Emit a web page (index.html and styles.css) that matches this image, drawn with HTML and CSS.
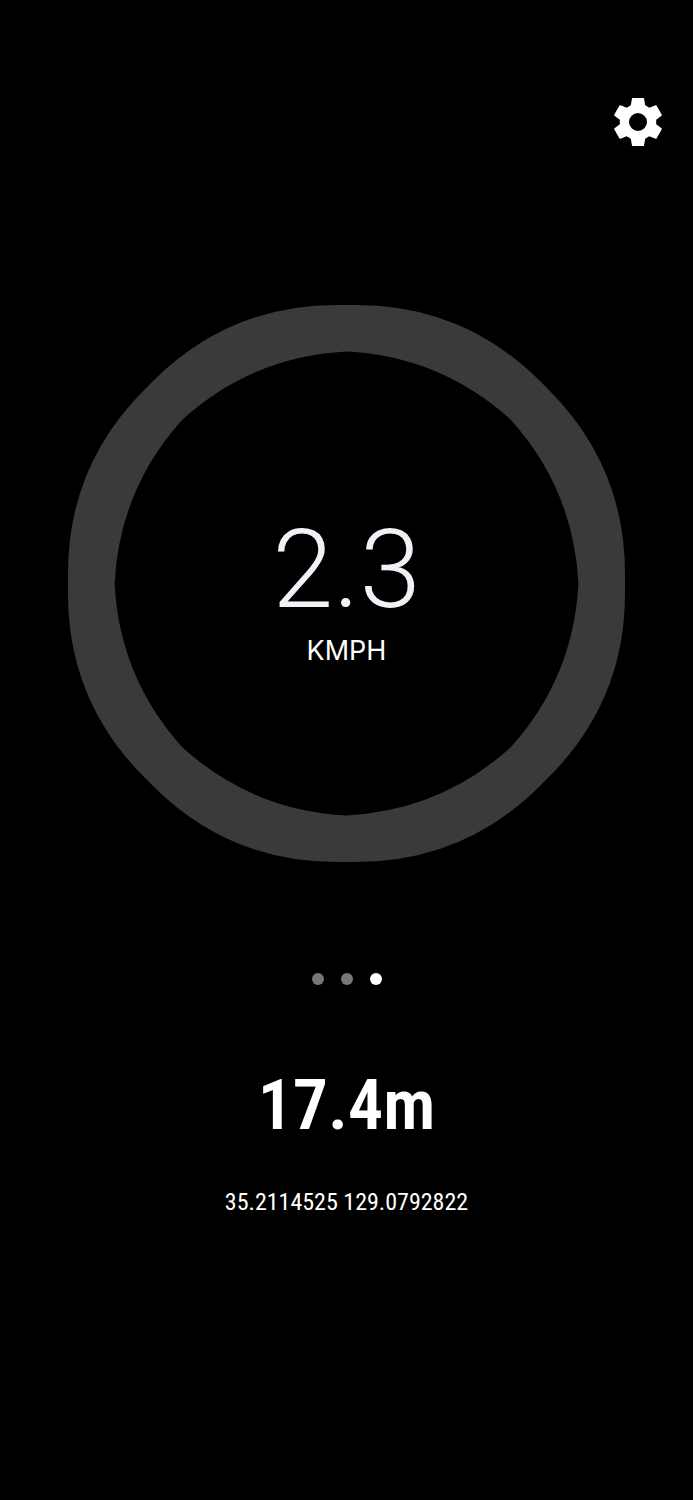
FILE: index.html
```html
<!DOCTYPE html>
<html lang="en">
<head>
    <meta charset="UTF-8">
    <meta name="viewport" content="width=device-width, initial-scale=1.0">
    <title>Speedometer</title>
    <link rel="stylesheet" href="styles.css">
</head>
<body>
    <header class="top-bar">
        <button type="button" class="settings-btn" aria-label="Settings">
            <svg viewBox="0 0 48 50" aria-hidden="true">
                <path fill-rule="evenodd" d="M18.500 1H29.500Q30 1 30 1.500L31.200 8.300L35.300 10.700L41.500 8.200Q42.200 8 42.500 8.500L47.800 17.800Q48 18.400 47.500 18.800L42.200 22.800V27.200L47.500 31.200Q48 31.600 47.800 32.200L42.500 41.500Q42.200 42 41.500 41.800L35.300 39.300L31.200 41.700L30 48.500Q30 49 29.500 49H18.500Q18 49 18 48.500L16.800 41.700L12.700 39.300L6.500 41.800Q5.800 42 5.500 41.500L.2 32.200Q0 31.600 .5 31.200L5.800 27.200V22.800L.5 18.800Q0 18.400 .2 17.800L5.500 8.500Q5.800 8 6.500 8.200L12.700 10.700L16.800 8.300L18 1.500Q18 1 18.500 1ZM24 16A9 9 0 1 0 24 34A9 9 0 1 0 24 16Z"/>
            </svg>
        </button>
    </header>

    <main>
        <section class="gauge">
            <svg class="gauge-ring" viewBox="-278 -278 556 556" aria-hidden="true">
                <path fill-rule="evenodd" d="
                    M-10 -278H10Q117.2 -278 193.4 -201.8L201.8 -193.4Q278 -117.2 278 -10
                    V10Q278 117.2 201.8 193.4L193.4 201.8Q117.2 278 10 278
                    H-10Q-117.2 278 -193.4 201.8L-201.8 193.4Q-278 117.2 -278 10
                    V-10Q-278 -117.2 -201.8 -193.4L-193.4 -201.8Q-117.2 -278 -10 -278Z
                    M0 -231.5Q93.9 -226.7 163.7 -163.7Q226.7 -93.9 231.5 0
                    Q226.7 93.9 163.7 163.7Q93.9 226.7 0 231.5
                    Q-93.9 226.7 -163.7 163.7Q-226.7 93.9 -231.5 0
                    Q-226.7 -93.9 -163.7 -163.7Q-93.9 -226.7 0 -231.5Z"/>
            </svg>
            <div class="reading">
                <span class="speed">2.3</span>
                <span class="unit">KMPH</span>
            </div>
        </section>

        <nav class="pager" aria-label="Pages">
            <button type="button" class="dot" aria-label="Page 1"></button>
            <button type="button" class="dot" aria-label="Page 2"></button>
            <button type="button" class="dot active" aria-label="Page 3" aria-current="true"></button>
        </nav>

        <p class="altitude">17.4m</p>
        <p class="coords">35.2114525 129.0792822</p>
    </main>
</body>
</html>
```
FILE: styles.css
```css
body {
    margin: 0;
    min-height: 100vh;
    background-color: #000;
    color: #fff;
    font-family: Inter, Roboto, sans-serif;
}
button {
    padding: 0;
    border: 0;
    background: none;
    cursor: pointer;
}
.top-bar {
    display: flex;
    justify-content: flex-end;
    padding: 97px 31px 0;
}
.settings-btn {
    width: 48px;
    height: 50px;
}
.settings-btn svg {
    display: block;
    fill: #fff;
}
main {
    display: flex;
    flex-direction: column;
    align-items: center;
    padding: 158px 68px 0;
}
/* ring and reading share one grid cell */
.gauge {
    display: grid;
    width: 100%;
}
.gauge-ring,
.reading {
    grid-area: 1 / 1;
}
.gauge-ring {
    width: 100%;
    fill: #3a3a3a;
}
.reading {
    display: flex;
    flex-direction: column;
    align-items: center;
    justify-content: center;
    padding-top: 4px;
}
.speed {
    font-family: Roboto, sans-serif;
    font-size: 110px;
    font-weight: 350;
    line-height: 130px;
    color: #f2f1f7;
}
.unit {
    font-size: 27px;
    line-height: 32px;
}
.pager {
    display: flex;
    gap: 17px;
    margin-top: 111px;
}
.dot {
    width: 12px;
    height: 12px;
    border-radius: 50%;
    background-color: #777;
}
.dot.active {
    background-color: #fff;
}
.altitude {
    margin: 78px 0 0;
    font-family: "Roboto Condensed", Roboto, sans-serif;
    font-size: 70px;
    font-weight: 600;
    line-height: 84px;
}
.coords {
    margin: 39px 0 0;
    font-family: "Roboto Condensed", Roboto, sans-serif;
    font-size: 24px;
    line-height: 32px;
}
```
